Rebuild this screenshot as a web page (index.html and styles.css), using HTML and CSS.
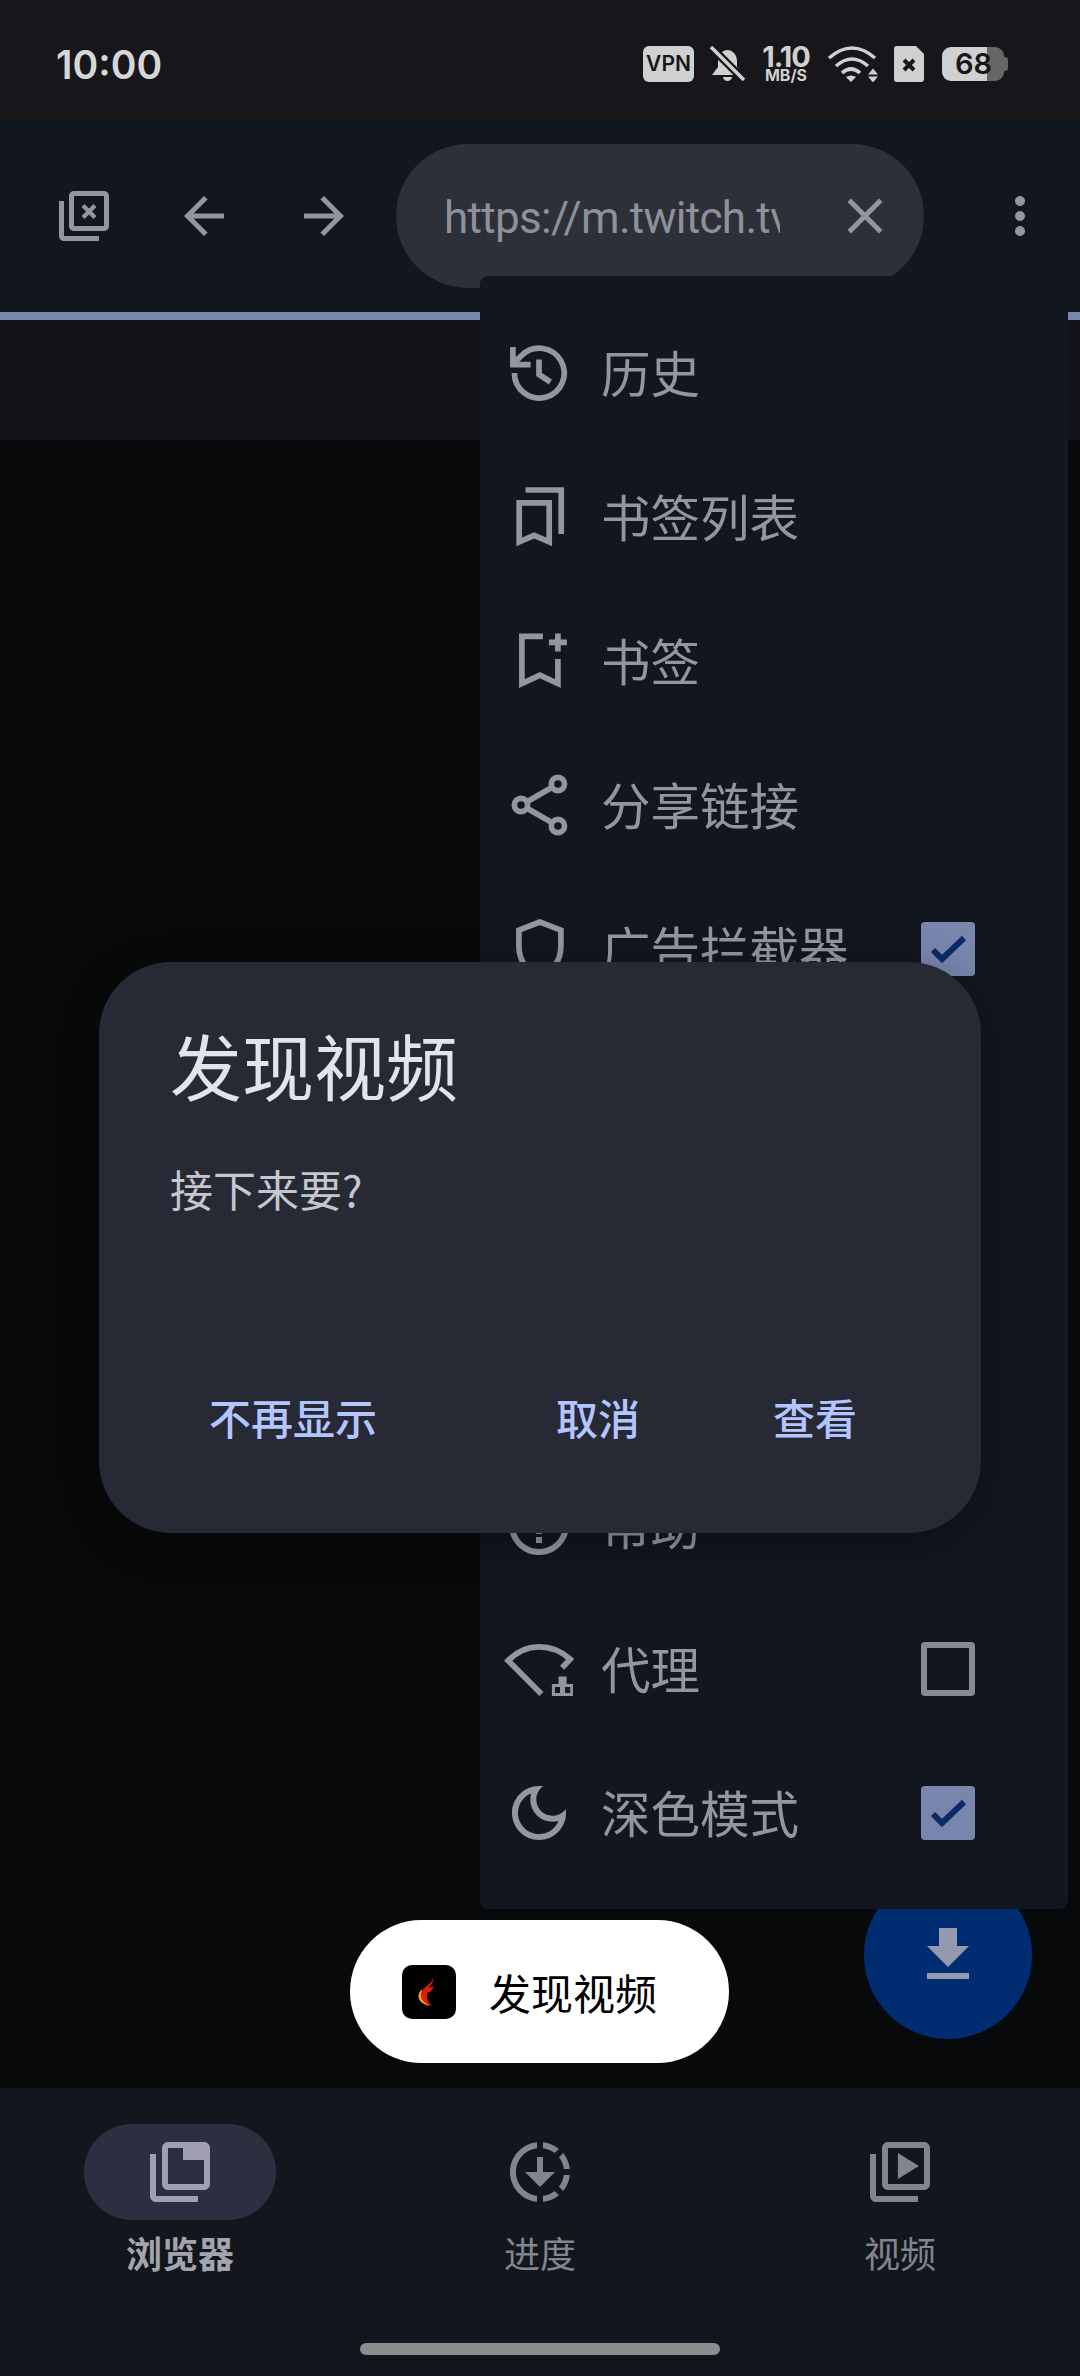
FILE: index.html
```html
<!DOCTYPE html>
<html lang="zh-CN">
<head>
  <meta charset="UTF-8">
  <title>发现视频</title>
  <link rel="stylesheet" href="styles.css">
</head>
<body>

<div class="phone">
  <div class="statusbar">
    <span class="time">10:00</span>
    <div class="status-icons">
      <span class="vpn">VPN</span>
      <svg class="bell" viewBox="0 0 35 36">
        <path d="M17.500 4C23 4 27 9 27 15v6l6 8H2l6-8v-6C8 9 12 4 17.500 4z"/>
        <path d="M13 31h9a4.500 4 0 0 1-9 0z"/>
        <path class="cut" d="M-1 -1L36 36"/>
        <path class="slash" d="M1 1l33 33"/>
      </svg>
      <div class="speed"><span class="speed-num">1.10</span><span class="speed-unit">MB/S</span></div>
      <svg class="wifi" viewBox="0 0 51 36">
        <path class="arc" d="M2 12Q25-8 48 12"/>
        <path class="arc" d="M9 20Q25 6 41 20"/>
        <path class="arc" d="M15 27Q24 19 33 27"/>
        <path d="M19 31Q24 28 29 31L24 36zM41 28.500l5-6 5 6zM41 30.500h10l-5 6z"/>
      </svg>
      <svg class="sim" viewBox="0 0 30 36">
        <path d="M3 0h19l8 8v25a3 3 0 0 1-3 3H3a3 3 0 0 1-3-3V3a3 3 0 0 1 3-3z"/>
        <path class="sim-x" d="M10 14l10 10M20 14L10 24"/>
      </svg>
      <div class="battery">68</div>
    </div>
  </div>

  <div class="toolbar">
    <svg class="tool-icon tabs-x" viewBox="0 0 24 24">
      <path fill-rule="evenodd" d="M4 6H2v14c0 1.100.9 2 2 2h14v-2H4V6zM20 2H8c-1.100 0-2 .9-2 2v12c0 1.100.9 2 2 2h12c1.100 0 2-.9 2-2V4c0-1.100-.9-2-2-2zm0 14H8V4h12v12z"/>
      <path class="x-stroke" d="M11.600 7.800l4.800 4.800M16.400 7.800l-4.800 4.800"/>
    </svg>
    <svg class="tool-icon nav-back" viewBox="0 0 24 24"><path d="M20 11H7.830l5.590-5.590L12 4l-8 8 8 8 1.410-1.410L7.830 13H20v-2z"/></svg>
    <svg class="tool-icon nav-forward" viewBox="0 0 24 24"><path d="M12 4l-1.410 1.410L16.170 11H4v2h12.170l-5.580 5.590L12 20l8-8z"/></svg>
    <div class="urlbar">
      <span class="url">https://m.twitch.tv/</span>
      <svg class="tool-icon url-close" viewBox="0 0 24 24"><path d="M19 6.410L17.590 5 12 10.590 6.410 5 5 6.410 10.590 12 5 17.590 6.410 19 12 13.410 17.590 19 19 17.590 13.410 12z"/></svg>
    </div>
    <svg class="tool-icon more" viewBox="0 0 24 24"><path d="M12 8c1.100 0 2-.9 2-2s-.9-2-2-2-2 .9-2 2 .9 2 2 2zm0 2c-1.100 0-2 .9-2 2s.9 2 2 2 2-.9 2-2-.9-2-2-2zm0 6c-1.100 0-2 .9-2 2s.9 2 2 2 2-.9 2-2-.9-2-2-2z"/></svg>
  </div>
  <div class="progress"></div>
  <div class="band"></div>
  <div class="content"></div>

  <div class="bottomnav">
    <div class="tabs">
      <div class="tab active">
        <div class="tab-pill">
          <svg class="tab-icon" viewBox="0 0 24 24"><path fill-rule="evenodd" d="M4 6H2v14c0 1.100.9 2 2 2h14v-2H4V6zM20 2H8c-1.100 0-2 .9-2 2v12c0 1.100.9 2 2 2h12c1.100 0 2-.9 2-2V4c0-1.100-.9-2-2-2zM8 4h5v4h7v8H8z"/></svg>
        </div>
        <span class="tab-label">浏览器</span>
      </div>
      <div class="tab">
        <div class="tab-pill">
          <svg class="tab-icon" viewBox="0 0 24 24"><path d="M18.320 4.260C16.840 3.050 15.010 2.250 13 2.050v2.020c1.460.18 2.790.76 3.900 1.620l1.420-1.430zM19.930 11h2.020c-.2-2.010-1-3.840-2.210-5.320L18.310 7.100c.86 1.110 1.440 2.440 1.620 3.900zM18.310 16.900l1.430 1.430c1.210-1.480 2.010-3.320 2.210-5.320h-2.020c-.18 1.450-.76 2.780-1.620 3.890zM13 19.930v2.020c2.010-.2 3.840-1 5.320-2.210l-1.430-1.430c-1.100.86-2.430 1.440-3.890 1.620zM13 12V7h-2v5H7l5 5 5-5h-4zM11 19.930v2.020c-5.050-.5-9-4.760-9-9.950s3.950-9.450 9-9.950v2.020C7.050 4.560 4 7.920 4 12s3.050 7.440 7 7.930z"/></svg>
        </div>
        <span class="tab-label">进度</span>
      </div>
      <div class="tab">
        <div class="tab-pill">
          <svg class="tab-icon" viewBox="0 0 24 24"><path fill-rule="evenodd" d="M4 6H2v14c0 1.100.9 2 2 2h14v-2H4V6zM20 2H8c-1.100 0-2 .9-2 2v12c0 1.100.9 2 2 2h12c1.100 0 2-.9 2-2V4c0-1.100-.9-2-2-2zm0 14H8V4h12v12z"/><path d="M11.300 5.700v8.600l7-4.300z"/></svg>
        </div>
        <span class="tab-label">视频</span>
      </div>
    </div>
    <div class="home-bar"></div>
  </div>

  <div class="fab">
    <svg class="fab-icon" viewBox="0 0 24 24"><path d="M19 9h-4V3H9v6H5l7 7 7-7zM5 18v2h14v-2H5z"/></svg>
  </div>

  <div class="menu">
    <div class="menu-row">
      <svg class="menu-icon line" viewBox="0 0 24 24"><path d="M3.800 12a8.300 8.300 0 1 0 2.500-5.900L3.500 8.800"/><path d="M3.300 3.300v5.900h5.900"/><path d="M12 7.500v5l3.800 2.500"/></svg>
      <span class="menu-text">历史</span>
    </div>
    <div class="menu-row">
      <svg class="menu-icon line miter" viewBox="0 0 24 24"><path d="M5.400 7.300h10v13l-5-2.200-5 2.200z"/><path d="M7.500 3h11.900v14.700"/></svg>
      <span class="menu-text">书签列表</span>
    </div>
    <div class="menu-row">
      <svg class="menu-icon line miter" viewBox="0 0 24 24"><path d="M13.300 3.800h-7v15.700l6-2.800 6 2.800v-8.200"/><path d="M18.300 2.800v6M15.300 5.800h6"/></svg>
      <span class="menu-text">书签</span>
    </div>
    <div class="menu-row">
      <svg class="menu-icon line" viewBox="0 0 24 24"><circle cx="18.300" cy="5" r="2.200"/><circle cx="6" cy="12" r="2.200"/><circle cx="18.300" cy="19" r="2.200"/><path d="M8 10.900l8.400-4.800M8 13.100l8.400 4.800"/></svg>
      <span class="menu-text">分享链接</span>
    </div>
    <div class="menu-row">
      <svg class="menu-icon line miter" viewBox="0 0 24 24"><path d="M12.300 3l-7 2.700V11c0 5 3 9 7 10 4-1 7-5 7-10V5.700z"/></svg>
      <span class="menu-text">广告拦截器</span>
      <span class="checkbox checked"><svg viewBox="0 0 54 54"><path d="M12 28l9 9 22-21"/></svg></span>
    </div>
    <div class="menu-covered"></div>
    <div class="menu-row">
      <svg class="menu-icon" viewBox="0 0 24 24"><path d="M11 18h2v-2h-2v2zm1-16C6.480 2 2 6.480 2 12s4.480 10 10 10 10-4.480 10-10S17.520 2 12 2zm0 18c-4.410 0-8-3.590-8-8s3.590-8 8-8 8 3.590 8 8-3.590 8-8 8zm0-14c-2.210 0-4 1.790-4 4h2c0-1.100.9-2 2-2s2 .9 2 2c0 2-3 1.750-3 5h2c0-2.250 3-2.500 3-5 0-2.210-1.790-4-4-4z"/></svg>
      <span class="menu-text">帮助</span>
    </div>
    <div class="menu-row">
      <svg class="menu-icon line" viewBox="0 0 24 24"><path d="M12.800 20.300L1.700 9.200C4.500 6.300 8 4.600 12 4.600c4 0 7.700 1.600 10.400 4.100l-2.700 2.900"/><path class="solid" fill-rule="evenodd" d="M18.500 14.500h2.700V17h2.100v4h-7v-4h2.200zM17.300 18v2h1.700v-2zM20.700 18v2h1.700v-2z"/></svg>
      <span class="menu-text">代理</span>
      <span class="checkbox"></span>
    </div>
    <div class="menu-row">
      <svg class="menu-icon" viewBox="0 0 24 24"><path d="M9.370 5.510C9.190 6.150 9.100 6.820 9.100 7.500c0 4.080 3.320 7.400 7.400 7.400.68 0 1.350-.09 1.990-.27C17.450 17.190 14.930 19 12 19c-3.860 0-7-3.140-7-7 0-2.930 1.810-5.450 4.370-6.490zM12 3c-4.970 0-9 4.030-9 9s4.030 9 9 9 9-4.030 9-9c0-.46-.04-.92-.1-1.360-.98 1.370-2.580 2.260-4.400 2.260-2.980 0-5.400-2.420-5.400-5.400 0-1.810.89-3.420 2.260-4.400C12.920 3.040 12.460 3 12 3z"/></svg>
      <span class="menu-text">深色模式</span>
      <span class="checkbox checked"><svg viewBox="0 0 54 54"><path d="M12 28l9 9 22-21"/></svg></span>
    </div>
  </div>

  <div class="toast">
    <svg class="toast-logo" viewBox="0 0 54 54">
      <path fill="#f59a23" d="M20 24c-6 6-5 14 8 17-6-4-9-9-8-17z"/>
      <path fill="#d81e06" d="M31 12c0 6-7 8-11 14-3 6 0 12 10 15-5-5-6-9-4-14 2 1 4-1 6-6-2 1-4 2-5 1 2-2 5-5 4-10z"/>
    </svg>
    <span class="toast-text">发现视频</span>
  </div>

  <div class="dialog">
    <div class="dialog-title">发现视频</div>
    <div class="dialog-body">接下来要?</div>
    <div class="dialog-actions">
      <span class="dialog-btn first">不再显示</span>
      <span class="dialog-btn">取消</span>
      <span class="dialog-btn">查看</span>
    </div>
  </div>
</div>

</body>
</html>
```

FILE: styles.css
```css
* {
  box-sizing: border-box;
}
body {
  margin: 0;
  background: #08090b;
  font-family: "Noto Sans CJK SC", "Noto Sans", sans-serif;
}
.phone {
  position: relative;
  width: 1080px;
  height: 2376px;
  display: flex;
  flex-direction: column;
  overflow: hidden;
  background: #08090b;
}

/* status bar */
.statusbar {
  height: 120px;
  flex: none;
  display: flex;
  align-items: center;
  padding: 8px 72px 0 56px;
  background: #16161b;
  color: #d0d0d0;
  font-family: Inter, sans-serif;
}
.time {
  font-size: 39px;
  font-weight: 600;
  color: #d6d6d6;
}
.status-icons {
  margin-left: auto;
  display: flex;
  align-items: center;
  gap: 16px;
  height: 36px;
}
.vpn {
  width: 51px;
  height: 36px;
  border-radius: 6px;
  background: #d0d0d0;
  color: #16161b;
  font-size: 21px;
  font-weight: 600;
  line-height: 36px;
  text-align: center;
}
.bell {
  width: 35px;
  height: 36px;
  fill: #d0d0d0;
}
.cut {
  stroke: #16161b;
  stroke-width: 8;
}
.slash {
  stroke: #d0d0d0;
  stroke-width: 3.500;
}
.speed {
  width: 50px;
  display: flex;
  flex-direction: column;
  align-items: center;
  font-weight: 700;
}
.speed-num {
  font-size: 29px;
  line-height: 23px;
  letter-spacing: -1px;
}
.speed-unit {
  font-size: 16px;
  line-height: 15px;
  white-space: nowrap;
}
.wifi {
  width: 51px;
  height: 36px;
  fill: #d0d0d0;
}
.wifi .arc {
  fill: none;
  stroke: #d0d0d0;
  stroke-width: 3.600;
}
.sim {
  width: 30px;
  height: 36px;
  fill: #d0d0d0;
}
.sim-x {
  fill: none;
  stroke: #16161b;
  stroke-width: 4;
}
.battery {
  position: relative;
  width: 62px;
  height: 34px;
  margin-right: 4px;
  margin-left: 2px;
  padding-left: 13px;
  border-radius: 9px;
  background: linear-gradient(90deg, #d0d0d0 45px, #666 45px);
  color: #16161b;
  font-size: 29px;
  font-weight: 600;
  line-height: 34px;
}
.battery::after {
  content: "";
  position: absolute;
  right: -4px;
  top: 10px;
  width: 4px;
  height: 14px;
  border-radius: 0 3px 3px 0;
  background: #666;
}

/* toolbar */
.toolbar {
  height: 192px;
  flex: none;
  display: flex;
  align-items: center;
  padding: 24px 0 24px 54px;
  background: #12161e;
}
.tool-icon {
  width: 60px;
  height: 60px;
  flex: none;
  fill: #94959f;
}
.x-stroke {
  fill: none;
  stroke: #94959f;
  stroke-width: 1.700;
}
.nav-back,
.nav-forward {
  margin-left: 60px;
}
.urlbar {
  width: 528px;
  height: 144px;
  margin-left: 42px;
  display: flex;
  align-items: center;
  padding-left: 48px;
  border-radius: 72px;
  background: #2d3039;
}
.url {
  width: 336px;
  margin-top: 3px;
  overflow: hidden;
  white-space: nowrap;
  color: #8f9098;
  font-family: Roboto, sans-serif;
  font-size: 44px;
  letter-spacing: -.7px;
}
.url-close {
  margin-left: 55px;
}
.more {
  margin-left: 66px;
}
.progress {
  height: 8px;
  flex: none;
  background: #7885ad;
}
.band {
  height: 120px;
  flex: none;
  background: #131418;
}
.content {
  flex: 1;
  background: #08090b;
}

/* bottom navigation */
.bottomnav {
  height: 288px;
  flex: none;
  display: flex;
  flex-direction: column;
  padding-top: 36px;
  background: #12161d;
}
.tabs {
  display: grid;
  grid-template-columns: repeat(3, 1fr);
}
.tab {
  display: flex;
  flex-direction: column;
  align-items: center;
}
.tab-pill {
  width: 192px;
  height: 96px;
  display: flex;
  align-items: center;
  justify-content: center;
  border-radius: 48px;
}
.tab-icon {
  width: 72px;
  height: 72px;
  fill: #83848f;
}
.tab-label {
  margin: 7px 0 3px;
  color: #83848d;
  font-size: 36px;
  line-height: 50px;
}
.tab.active .tab-pill {
  background: #2d2e40;
}
.tab.active .tab-icon {
  fill: #a09fb5;
}
.tab.active .tab-label {
  color: #a3a4ae;
  font-weight: 700;
}
.home-bar {
  width: 360px;
  height: 12px;
  margin: 63px auto 0;
  border-radius: 6px;
  background: #8c8d8f;
}

/* floating things */
.fab {
  position: absolute;
  left: 864px;
  top: 1871px;
  width: 168px;
  height: 168px;
  display: flex;
  align-items: center;
  justify-content: center;
  border-radius: 50%;
  background: #002c71;
}
.fab-icon {
  width: 72px;
  height: 72px;
  fill: #9499b0;
}
.menu {
  position: absolute;
  left: 480px;
  top: 276px;
  width: 588px;
  height: 1633px;
  padding: 25px 93px 0 23px;
  border-radius: 8px;
  background: #12161e;
}
.menu-row {
  height: 144px;
  display: flex;
  align-items: center;
}
.menu-covered {
  height: 432px;
}
.menu-icon {
  width: 72px;
  height: 72px;
  flex: none;
  fill: #94959f;
}
.menu-icon.line {
  fill: none;
  stroke: #94959f;
  stroke-width: 1.900;
}
.menu-icon.miter {
  stroke-miterlimit: 8;
}
.menu-icon .solid {
  fill: #94959f;
  stroke: none;
}
.menu-text {
  margin: 0 0 4px 26px;
  color: #94959e;
  font-size: 49.500px;
}
.checkbox {
  width: 54px;
  height: 54px;
  margin-left: auto;
  border: 6px solid #868892;
  border-radius: 4px;
}
.checkbox.checked {
  border: none;
  background: #7885ad;
}
.checkbox svg {
  display: block;
  width: 54px;
  height: 54px;
  fill: none;
  stroke: #0a2a66;
  stroke-width: 6;
}
.toast {
  position: absolute;
  left: 350px;
  top: 1920px;
  width: 379px;
  height: 143px;
  display: flex;
  align-items: center;
  padding-left: 52px;
  border-radius: 72px;
  background: #fff;
}
.toast-logo {
  width: 54px;
  height: 54px;
  border-radius: 10px;
  background: #000;
}
.toast-text {
  margin-left: 33px;
  color: #000;
  font-size: 42px;
}
.dialog {
  position: absolute;
  left: 99px;
  top: 962px;
  width: 882px;
  height: 571px;
  display: flex;
  flex-direction: column;
  padding: 54px 88px 74px 71px;
  border-radius: 72px;
  background: #272a35;
  box-shadow: 0 10px 40px rgba(0, 0, 0, .3);
}
.dialog-title {
  color: #e2e3ee;
  font-size: 72px;
  line-height: 96px;
}
.dialog-body {
  margin-top: 46px;
  color: #c5c6d0;
  font-size: 43px;
  line-height: 60px;
}
.dialog-actions {
  margin-top: auto;
  display: flex;
  align-items: center;
  gap: 61px;
}
.dialog-btn {
  padding: 0 36px;
  color: #b3c5ff;
  font-size: 42px;
  font-weight: 500;
  line-height: 84px;
}
.dialog-btn.first {
  margin-left: 3px;
  margin-right: auto;
}
```
